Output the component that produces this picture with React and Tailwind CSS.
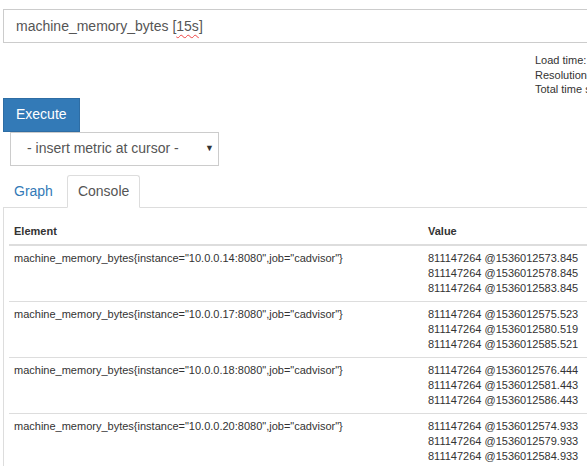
import React from 'react';

const rows = [
  {
    instance: '10.0.0.14:8080',
    values: ['811147264 @1536012573.845', '811147264 @1536012578.845', '811147264 @1536012583.845'],
  },
  {
    instance: '10.0.0.17:8080',
    values: ['811147264 @1536012575.523', '811147264 @1536012580.519', '811147264 @1536012585.521'],
  },
  {
    instance: '10.0.0.18:8080',
    values: ['811147264 @1536012576.444', '811147264 @1536012581.443', '811147264 @1536012586.443'],
  },
  {
    instance: '10.0.0.20:8080',
    values: ['811147264 @1536012574.933', '811147264 @1536012579.933', '811147264 @1536012584.933'],
  },
];

export default function App() {
  return (
    <div className="h-[466px] w-[587px] overflow-hidden bg-white font-['Liberation_Sans',Arial,sans-serif] text-[#333]">
      <div className="w-[660px] pl-[3px] pt-[9px]">
        {/* expression input */}
        <div className="flex h-[34px] items-center border border-[#ccc] pl-[12px] text-[14px] text-[#555]">
          machine_memory_bytes [
          <span className="underline decoration-[#e44] decoration-wavy decoration-1 underline-offset-[3px]">15s</span>]
        </div>

        {/* stats */}
        <div className="ml-[532px] mt-[10px] text-[11px] leading-[14.5px] text-[#333]">
          <div>Load time:</div>
          <div>Resolution:</div>
          <div>Total time series: 4</div>
        </div>

        {/* execute + metric select */}
        <button className="mt-[1px] flex h-[34px] items-center border border-[#2e6da4] bg-[#337ab7] px-[12px] text-[14px] text-white">
          Execute
        </button>
        <div className="ml-[7px] flex h-[34px] w-[209px] items-center justify-between border border-[#ccc] pl-[16px] pr-[4px] text-[14px] text-[#555]">
          <span>- insert metric at cursor -</span>
          <span className="text-[9px] text-[#333]">▼</span>
        </div>

        {/* tabs */}
        <div className="mt-[9px] flex text-[14px]">
          <div className="mr-[3px] border border-transparent px-[10px] py-[5px] leading-[20px] text-[#337ab7]">Graph</div>
          <div className="relative z-10 -mb-px rounded-t-[3px] border border-[#ddd] border-b-white bg-white px-[10px] py-[5px] leading-[20px] text-[#555]">
            Console
          </div>
        </div>

        {/* console table */}
        <div className="border border-[#ddd] pl-[5px] pt-[11px] text-[11px] leading-[15px]">
          <div className="grid grid-cols-[414px_1fr] border-b-2 border-[#ddd] font-bold">
            <div className="p-[5px]">Element</div>
            <div className="p-[5px]">Value</div>
          </div>
          {rows.map((r, i) => (
            <div key={r.instance} className={`grid grid-cols-[414px_1fr] ${i > 0 ? 'border-t border-[#ddd]' : ''}`}>
              <div className="p-[5px]">
                machine_memory_bytes{'{'}instance="{r.instance}",job="cadvisor"{'}'}
              </div>
              <div className="p-[5px]">
                {r.values.map((v) => (
                  <div key={v}>{v}</div>
                ))}
              </div>
            </div>
          ))}
        </div>
      </div>
    </div>
  );
}
